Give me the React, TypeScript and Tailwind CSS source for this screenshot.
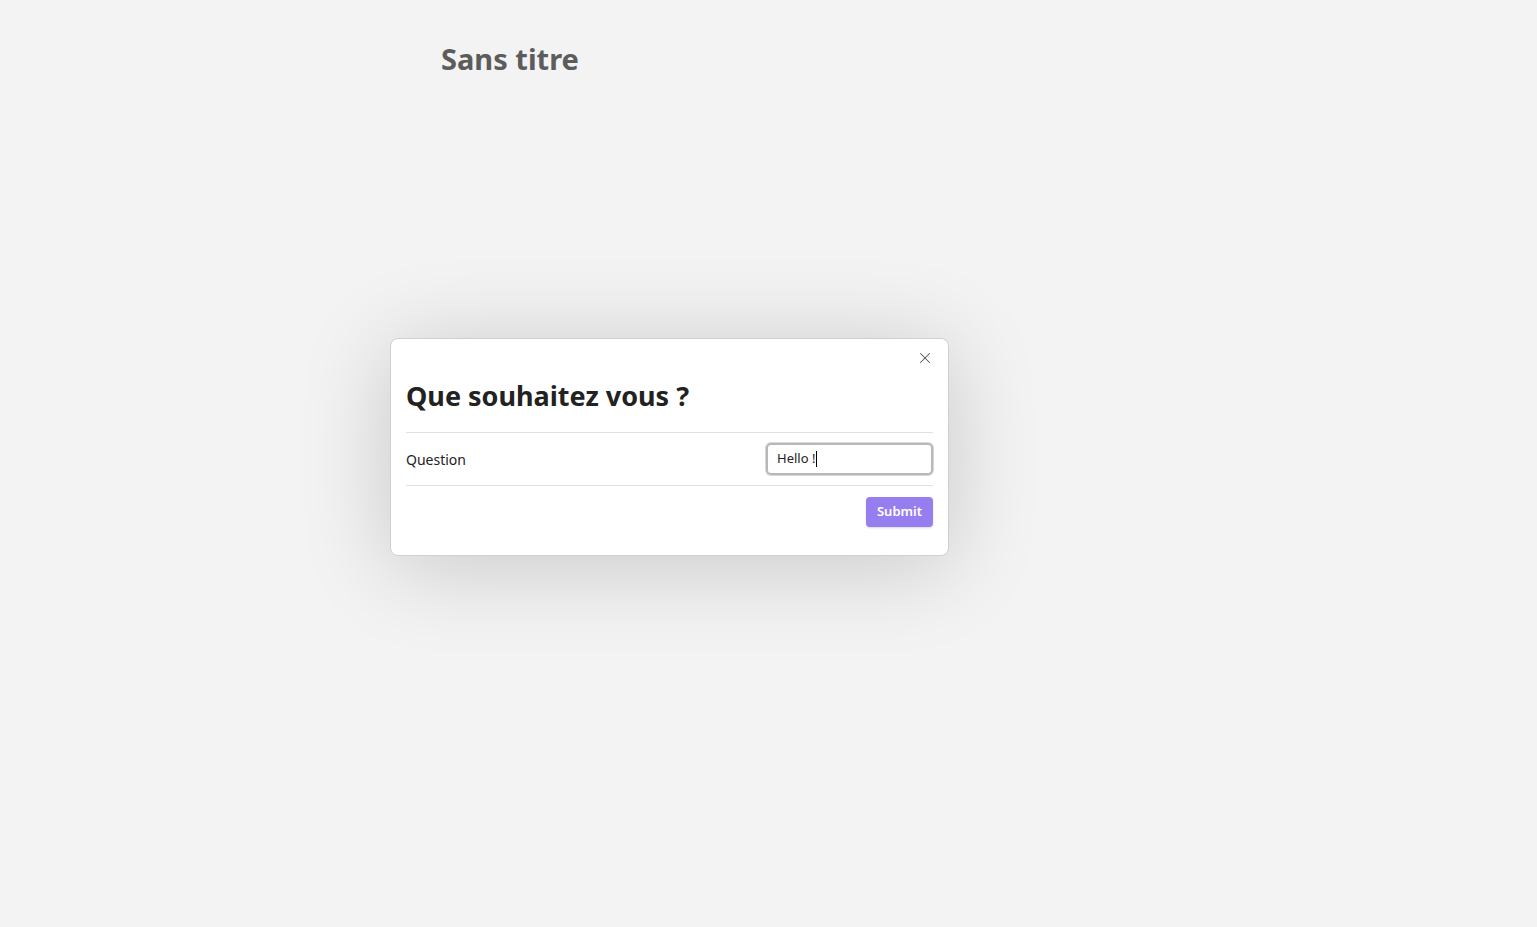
import { X } from "lucide-react";

export default function App() {
  return (
    <div
      className="min-h-screen w-full bg-[#f3f3f3] text-[#222]"
      style={{ fontFamily: '"Noto Sans", "Open Sans", sans-serif' }}
    >
      <div className="pl-[441px] pt-[37px]">
        <h1 className="text-[29px] leading-[44px] font-bold text-[#5c5c5c]">Sans titre</h1>
      </div>

      <div className="ml-[390px] mt-[257px] w-[559px] rounded-[8px] border border-[#d0d0d0] bg-white px-[15px] pt-[10px] pb-[28px] shadow-[0_10px_90px_rgba(0,0,0,0.18)]">
        <div className="flex justify-end">
          <button className="-mr-[2px] flex h-[18px] w-[20px] items-center justify-center text-[#555]">
            <X size={18} strokeWidth={1.4} />
          </button>
        </div>
        <h2 className="mt-[10px] text-[27px] leading-[38px] font-bold text-[#222]">Que souhaitez vous ?</h2>

        <div className="mt-[17px] flex items-center justify-between border-t border-b border-[#e0e0e0] py-[10px]">
          <span className="text-[14px] text-[#222]">Question</span>
          <div className="flex h-[32px] w-[167px] items-center rounded-[5px] border-2 border-[#b8b8b8] bg-white px-[9px] text-[13px] text-[#222] shadow-[0_0_0_1px_#d8d8d8]">
            <span>Hello !</span>
            <span className="ml-[1px] h-[16px] w-px bg-black" />
          </div>
        </div>

        <div className="mt-[11px] flex justify-end">
          <button className="h-[30px] rounded-[4px] bg-[#977ef0] px-[11px] text-[13px] font-semibold text-white shadow-[0_1px_2px_rgba(0,0,0,0.15)]">
            Submit
          </button>
        </div>
      </div>
    </div>
  );
}
